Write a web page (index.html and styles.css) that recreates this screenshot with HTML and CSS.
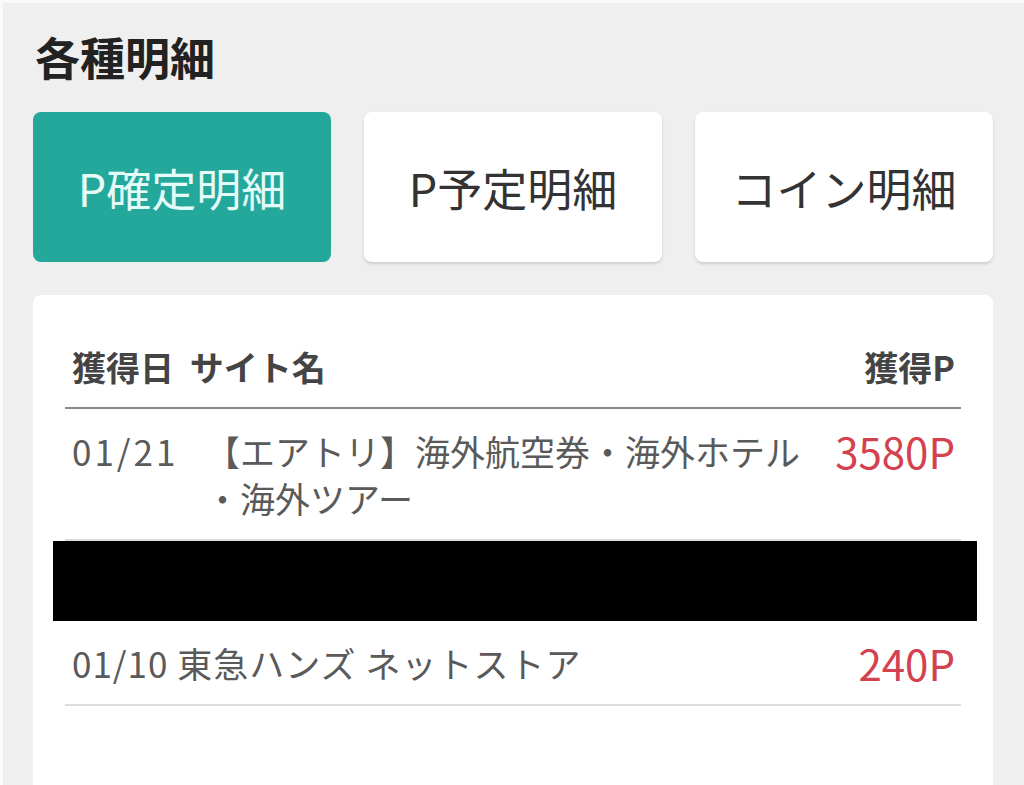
FILE: index.html
```html
<!DOCTYPE html>
<html lang="ja">
<head>
    <meta charset="UTF-8">
    <meta name="viewport" content="width=device-width, initial-scale=1.0">
    <title>各種明細</title>
    <link rel="stylesheet" href="styles.css">
</head>
<body>
  <div class="page">
    <h2 class="title">各種明細</h2>

    <div class="tabs">
        <div class="tab active">P確定明細</div>
        <div class="tab">P予定明細</div>
        <div class="tab">コイン明細</div>
    </div>

    <div class="card">
        <div class="head">
            <span>獲得日 サイト名</span>
            <span>獲得P</span>
        </div>

        <div class="row">
            <span class="date">01/21</span>
            <span class="name">【エアトリ】海外航空券・海外ホテル<br>・海外ツアー</span>
            <span class="point">3580P</span>
        </div>

        <div class="redacted"></div>

        <div class="row row-plain">
            <span class="name">01/10 東急ハンズ ネットストア</span>
            <span class="point">240P</span>
        </div>
    </div>
  </div>
</body>
</html>
```

FILE: styles.css
```css
/* page */
body {
  margin: 0;
  background: #efefef;
  font-family: "Noto Sans CJK JP", "Noto Sans", sans-serif;
  border-top: 3px solid #fafafa;
  border-left: 3px solid #fafafa;
}
.page {
  padding: 0 31px 0 30px;
  height: 782px;
  overflow: hidden;
}
.title {
  margin: 0;
  padding: 26px 0 0 2px;
  height: 109px;
  box-sizing: border-box;
  font-size: 45px;
  line-height: 56px;
  font-weight: 700;
  color: #222;
}

/* tabs */
.tabs {
  display: grid;
  grid-template-columns: repeat(3, 1fr);
  gap: 33px;
}
.tab {
  height: 150px;
  display: flex;
  justify-content: center;
  align-items: center;
  background: #fff;
  border-radius: 8px;
  box-shadow: 0 2px 3px rgba(0, 0, 0, 0.14);
  font-size: 45px;
  font-weight: 400;
  color: #333;
}
.tab.active {
  background: #24a89b;
  color: #e4fbf8;
  box-shadow: none;
}

/* list */
.card {
  margin-top: 33px;
  background: #fff;
  border-radius: 8px;
  padding: 52px 32px 0;
  height: 500px;
}
.head {
  display: flex;
  justify-content: space-between;
  padding: 0 6px 20px 7px;
  border-bottom: 2px solid #8a8a8a;
  font-size: 34px;
  line-height: 40px;
  font-weight: 700;
  color: #444;
}
.head span:first-child {
  word-spacing: 8px;
}
.row {
  display: grid;
  grid-template-columns: 133px 1fr auto;
  padding: 18px 6px 18px 7px;
  border-bottom: 2px solid #dcdcdc;
  font-size: 35px;
  line-height: 47px;
  color: #5a5a5a;
}
.row-plain {
  grid-template-columns: 1fr auto;
}
.row-plain .name {
  letter-spacing: 1px;
}
.date {
  letter-spacing: 3px;
}
.point {
  font-size: 42px;
  font-weight: 400;
  color: #d4414f;
}
.redacted {
  height: 80px;
  margin: 0 -16px 0 -12px;
  background: #000;
}
```
